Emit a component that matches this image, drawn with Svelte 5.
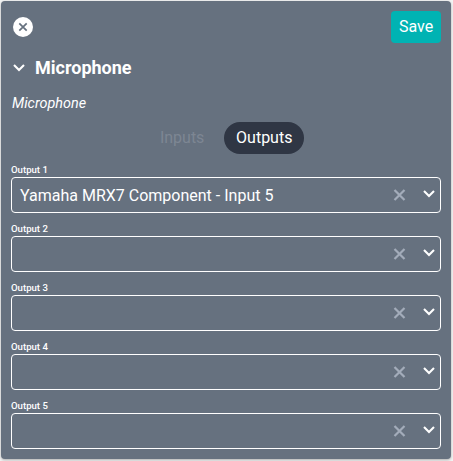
<script>
  const outputs = [
    { label: 'Output 1', value: 'Yamaha MRX7 Component - Input 5' },
    { label: 'Output 2', value: '' },
    { label: 'Output 3', value: '' },
    { label: 'Output 4', value: '' },
    { label: 'Output 5', value: '' }
  ];
</script>

{#snippet chevron()}
  <svg class="chevron" width="12" height="8" viewBox="0 0 12 8"><path d="M1 1.1 6 6l5-4.9" /></svg>
{/snippet}

<div class="page">
  <div class="card">
    <div class="top">
      <button class="close" aria-label="Close">
        <svg width="20" height="20" viewBox="0 0 20 20">
          <circle cx="10" cy="10" r="10" fill="#fff" />
          <path d="M6.3 6.3l7.4 7.4M13.7 6.3l-7.4 7.4" stroke="#66717f" stroke-width="1.7" />
        </svg>
      </button>
      <button class="save">Save</button>
    </div>
    <div class="title">{@render chevron()}<h2>Microphone</h2></div>
    <div class="subtitle">Microphone</div>
    <div class="tabs">
      <button class="tab">Inputs</button>
      <button class="tab active">Outputs</button>
    </div>
    {#each outputs as output}
      <div class="field">
        <div class="label">{output.label}</div>
        <div class="select">
          <span class="value">{output.value}</span>
          <svg class="clear" width="13" height="12" viewBox="0 0 13 12"><path d="M1.5 1l10 10M11.5 1l-10 10" /></svg>
          {@render chevron()}
        </div>
      </div>
    {/each}
  </div>
</div>

<style>
  :global(body) { background: #f3f4f4; overflow: hidden; }
  .page { padding: 1px; height: 461px; box-sizing: border-box; font-family: Roboto, "Liberation Sans", sans-serif; color: #fff; }
  .card { width: 450px; height: 458px; box-sizing: border-box; padding: 10px; background: #66717f; border-radius: 4px; box-shadow: 0 1px 3px rgba(0, 0, 0, 0.3); }
  button { border: 0; margin: 0; padding: 0; background: none; color: inherit; font: 16px/32px Roboto, "Liberation Sans", sans-serif; }
  svg { display: block; flex: none; }
  .top { display: flex; justify-content: space-between; align-items: center; height: 32px; }
  .close { margin-left: 2px; height: 20px; }
  .save { width: 50px; height: 32px; border-radius: 4px; background: #00b3b3; }
  .title { display: flex; align-items: center; height: 30px; margin-top: 10px; padding-left: 2px; gap: 10px; }
  h2 { margin: 0; font-size: 18px; line-height: 30px; font-weight: 700; }
  .chevron { fill: none; stroke: #fff; stroke-width: 2.1; }
  .subtitle { margin-top: 10px; padding-left: 1px; height: 20px; font-size: 14.4px; line-height: 22px; font-style: italic; }
  .tabs { display: flex; justify-content: center; height: 32px; margin-top: 9px; gap: 8px; }
  .tab { padding: 0 11.7px 0 12px; border-radius: 16px; color: #7d8693; }
  .active { background: #2f3644; color: #fff; }
  .field { height: 59px; }
  .label { height: 23px; box-sizing: border-box; padding-top: 10px; font-size: 9.6px; line-height: 12px; font-weight: 500; }
  .select { display: flex; align-items: center; height: 36px; box-sizing: border-box; border: 1px solid #fff; border-radius: 4px; padding: 0 5px 0 8px; }
  .value { flex: 1; padding-top: 2px; font-size: 16px; line-height: 32px; white-space: nowrap; }
  .clear { stroke: #a3acba; stroke-width: 2.2; margin-right: 17px; }
  .select .chevron { margin-bottom: 2px; }
</style>
